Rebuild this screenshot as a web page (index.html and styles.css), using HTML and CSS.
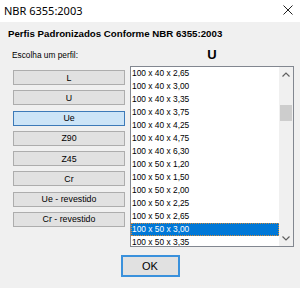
FILE: index.html
```html
<!DOCTYPE html>
<html lang="pt">
<head>
    <meta charset="UTF-8">
    <title>NBR 6355:2003</title>
    <link rel="stylesheet" href="styles.css">
</head>
<body>
    <div class="window">
        <div class="titlebar">
            <span class="title">NBR 6355:2003</span>
            <svg class="close" width="10" height="10" viewBox="0 0 10 10">
                <path d="M0.5 0.5 L9.5 9.5 M9.5 0.5 L0.5 9.5" stroke="#222" stroke-width="1" fill="none"/>
            </svg>
        </div>
        <div class="dialog">
            <div class="heading">Perfis Padronizados Conforme NBR 6355:2003</div>
            <div class="grid labels">
                <span class="hint">Escolha um perfil:</span>
                <span class="profile">U</span>
            </div>
            <div class="grid">
                <div class="buttons">
                    <button>L</button>
                    <button>U</button>
                    <button class="active">Ue</button>
                    <button>Z90</button>
                    <button>Z45</button>
                    <button>Cr</button>
                    <button>Ue - revestido</button>
                    <button>Cr - revestido</button>
                </div>
                <div class="listbox">
                    <ul class="items">
                        <li>100 x 40 x 2,65</li>
                        <li>100 x 40 x 3,00</li>
                        <li>100 x 40 x 3,35</li>
                        <li>100 x 40 x 3,75</li>
                        <li>100 x 40 x 4,25</li>
                        <li>100 x 40 x 4,75</li>
                        <li>100 x 40 x 6,30</li>
                        <li>100 x 50 x 1,20</li>
                        <li>100 x 50 x 1,50</li>
                        <li>100 x 50 x 2,00</li>
                        <li>100 x 50 x 2,25</li>
                        <li>100 x 50 x 2,65</li>
                        <li class="selected">100 x 50 x 3,00</li>
                        <li>100 x 50 x 3,35</li>
                    </ul>
                    <div class="scrollbar">
                        <svg class="arrow" width="8" height="5" viewBox="0 0 8 5">
                            <path d="M0.5 4.5 L4 1 L7.5 4.5" stroke="#606060" stroke-width="1.2" fill="none"/>
                        </svg>
                        <div class="track"><div class="thumb"></div></div>
                        <svg class="arrow" width="8" height="5" viewBox="0 0 8 5">
                            <path d="M0.5 0.5 L4 4 L7.5 0.5" stroke="#606060" stroke-width="1.2" fill="none"/>
                        </svg>
                    </div>
                </div>
            </div>
            <div class="footer">
                <button class="ok">OK</button>
            </div>
        </div>
    </div>
</body>
</html>
```

FILE: styles.css
```css
* {
    box-sizing: border-box;
}
body {
    margin: 0;
    width: 300px;
    height: 288px;
    overflow: hidden;
    font-family: "Liberation Sans", Arial, sans-serif;
    background-color: #f0f0f0;
    color: #000;
}
.titlebar {
    height: 22px;
    background-color: #fff;
    display: flex;
    justify-content: space-between;
    align-items: center;
    padding: 0 7px 2px 4px;
}
.title {
    font-family: "Noto Sans", sans-serif;
    font-size: 11px;
    color: #000;
}
.close {
    display: block;
}
.dialog {
    padding-top: 6px;
}
.heading {
    font-weight: bold;
    font-size: 9.7px;
    line-height: 12px;
    padding-left: 8px;
}
.grid {
    display: grid;
    grid-template-columns: 112px 164px;
    column-gap: 5px;
    margin-left: 13px;
}
.labels {
    margin-top: 7px;
    height: 14px;
    align-items: center;
    margin-bottom: 5px;
}
.hint {
    font-size: 8.3px;
    margin-left: -1px;
}
.profile {
    font-size: 13px;
    font-weight: bold;
    text-align: center;
}
.buttons {
    display: flex;
    flex-direction: column;
    gap: 5.25px;
    padding-top: 4px;
}
.buttons button {
    height: 15px;
    padding: 0;
    font-family: "Liberation Sans", Arial, sans-serif;
    font-size: 8.8px;
    color: #000;
    background-color: #e1e1e1;
    border: 1px solid #adadad;
}
.buttons button.active {
    background-color: #cce4f7;
    border-color: #3d7ab8;
}
.listbox {
    height: 181px;
    border: 1px solid #828790;
    background-color: #fff;
    display: flex;
}
.items {
    list-style: none;
    margin: 0;
    padding: 0;
    flex: 1;
    overflow: hidden;
}
.items li {
    height: 13px;
    line-height: 13px;
    padding-left: 1px;
    font-size: 8.4px;
    white-space: nowrap;
}
.items li.selected {
    background-color: #0078d7;
    color: #fff;
    outline: 1px dotted #d08a3a;
    outline-offset: -1px;
}
.scrollbar {
    width: 14px;
    background-color: #f0f0f0;
    display: flex;
    flex-direction: column;
    align-items: center;
}
.arrow {
    display: block;
    margin: 5px 0;
}
.track {
    flex: 1;
    width: 100%;
    padding: 23px 1px 0;
}
.thumb {
    height: 16px;
    background-color: #cdcdcd;
}
.footer {
    display: flex;
    justify-content: center;
    padding-top: 8px;
}
.ok {
    width: 59px;
    height: 22px;
    padding: 0;
    font-family: "Liberation Sans", Arial, sans-serif;
    font-size: 11px;
    color: #000;
    background-color: #e1e1e1;
    border: 2px solid #3a91dc;
}
```
